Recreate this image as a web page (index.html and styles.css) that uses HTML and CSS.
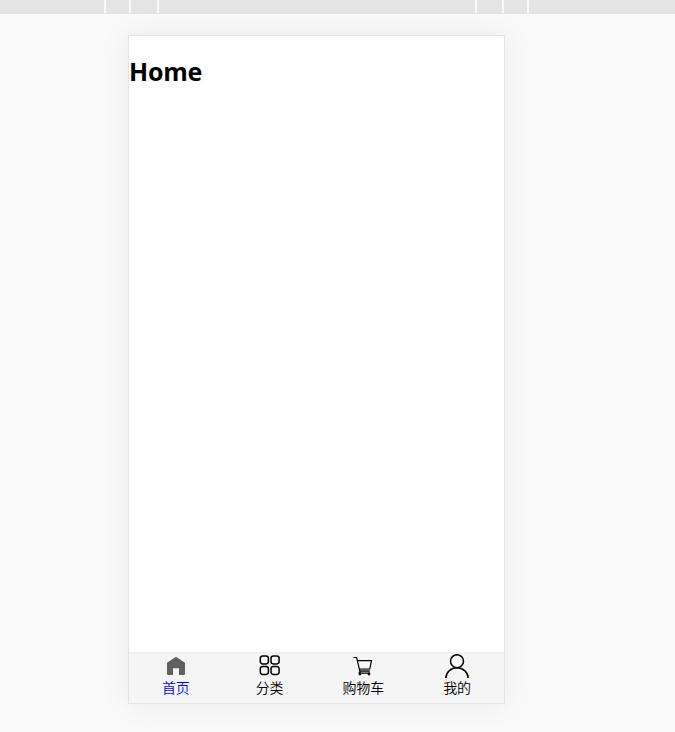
FILE: index.html
```html
<!DOCTYPE html>
<html lang="zh-CN">
<head>
<meta charset="utf-8">
<title>Home</title>
<link rel="stylesheet" href="styles.css">
</head>
<body>
<div class="ruler"><i></i><i></i><i></i><i></i><i></i><i></i></div>
<main class="phone">
  <h2 class="title">Home</h2>
  <nav class="tabs">
    <a class="tab active"><svg width="24" height="24" viewBox="0 0 24 24"><path d="M3 8.8 10.8 3.4Q12 2.6 13.2 3.4L21 8.8V20Q21 21 20 21H15V14.2H9V21H4Q3 21 3 20Z" fill="#606060"/></svg><span>首页</span></a>
    <a class="tab"><svg width="24" height="24" viewBox="0 0 24 24" fill="none" stroke="#000" stroke-width="1.5"><rect x="2.3" y="1.9" width="8.1" height="8" rx="2.3"/><rect x="13" y="1.9" width="8.1" height="8" rx="2.3"/><rect x="2.3" y="12.4" width="8.1" height="8" rx="2.3"/><rect x="13" y="12.4" width="8.1" height="8" rx="2.3"/></svg><span>分类</span></a>
    <a class="tab"><svg width="24" height="24" viewBox="0 0 24 24" fill="none" stroke="#000" stroke-width="1.2"><path d="M8.4 15.2H18.8L18.6 17H9Z" fill="#aaa" stroke="none"/><path d="M2.6 3.5H5.6L8.9 17.4L8.2 19.2H19M6.5 6.6H20.5L18.8 15H8.3M8.8 17.2H18.8"/><circle cx="9" cy="20" r=".8" fill="#000"/><circle cx="18" cy="20" r=".8" fill="#000"/></svg><span>购物车</span></a>
    <a class="tab"><svg width="24" height="24" viewBox="0 0 24 24" fill="none" stroke="#000" stroke-width="1.5"><circle cx="12" cy="7.2" r="6.5"/><path d="M.8 24C1.2 18 6 13.8 12 13.8S22.8 18 23.2 24"/></svg><span>我的</span></a>
  </nav>
</main>
</body>
</html>
```

FILE: styles.css
```css
*{box-sizing:border-box}
body{margin:0;height:732px;overflow:hidden;background:#fafafa;font-family:"Open Sans","Noto Sans CJK SC",sans-serif}
.ruler{height:14px;padding-bottom:1px;background:#e5e5e5;display:grid;grid-template-columns:106px 25px 28px 318px 27px 25px}
.ruler i{border-right:2px solid #fafafa}
.phone{width:377px;height:669px;margin:21px 0 0 128px;background:#fff;border:1px solid #e3e3e3;box-shadow:0 0 30px rgba(0,0,0,.07);display:flex;flex-direction:column}
.title{margin:19px 0 0;font-size:25px;line-height:33px;font-weight:700;letter-spacing:-.2px;color:#000}
.tabs{margin-top:auto;height:51px;display:grid;grid-template-columns:repeat(4,1fr);background:#f5f5f5;border-top:2px solid #efefef}
.tab{display:flex;flex-direction:column;align-items:center;font-size:14px;line-height:20px;font-weight:350;color:#000}
.tab svg{display:block}
.active{color:#00f}
```
